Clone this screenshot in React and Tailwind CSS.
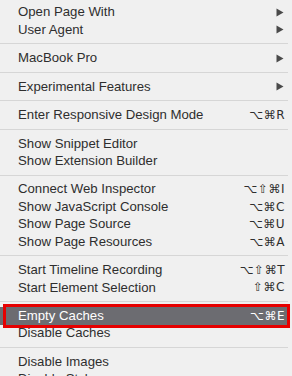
import React from "react";

const Arrow = () => (
  <svg width="8" height="9" viewBox="0 0 8 9">
    <path d="M0.5 0.5 L7.5 4.5 L0.5 8.5 Z" fill="#4a4a4a" />
  </svg>
);

const groups = [
  [
    { t: "Open Page With", arrow: true },
    { t: "User Agent", arrow: true },
  ],
  [{ t: "MacBook Pro", arrow: true }],
  [{ t: "Experimental Features", arrow: true }],
  [{ t: "Enter Responsive Design Mode", k: "⌥⌘R" }],
  [{ t: "Show Snippet Editor" }, { t: "Show Extension Builder" }],
  [
    { t: "Connect Web Inspector", k: "⌥⇧⌘I" },
    { t: "Show JavaScript Console", k: "⌥⌘C" },
    { t: "Show Page Source", k: "⌥⌘U" },
    { t: "Show Page Resources", k: "⌥⌘A" },
  ],
  [
    { t: "Start Timeline Recording", k: "⌥⇧⌘T" },
    { t: "Start Element Selection", k: "⇧⌘C" },
  ],
  [{ t: "Empty Caches", k: "⌥⌘E", hl: true }, { t: "Disable Caches" }],
  [{ t: "Disable Images" }, { t: "Disable Styles" }],
];

function Row({ item }) {
  return (
    <div
      className={
        "relative flex items-center h-[17.45px] pl-[18px] w-[288px] " +
        (item.arrow ? "pr-[4px] " : "pr-[3px] ") +
        (item.hl ? "bg-[#6c6c71] text-white" : "text-[#2e2e2e]")
      }
    >
      <span className="flex-1 whitespace-nowrap">{item.t}</span>
      {item.k && (
        <span className="whitespace-nowrap font-['DejaVu_Sans',sans-serif] text-[12px] tracking-[0.5px]">
          {item.k}
        </span>
      )}
      {item.arrow && <Arrow />}
      {item.hl && (
        <div className="absolute left-[3px] top-[-3px] w-[287px] h-[24px] border-[3px] border-[#e60000]" />
      )}
    </div>
  );
}

export default function App() {
  return (
    <div className="w-[292px] h-[376px] overflow-hidden bg-[#f0f0f0] font-['Liberation_Sans',Arial,sans-serif] text-[13.2px] pt-[3.5px]">
      {groups.map((g, i) => (
        <div key={i}>
          {i > 0 && (
            <div className="h-[11px] flex items-center">
              <div className="h-[1px] w-[288px] bg-[#d6d6d6]" />
            </div>
          )}
          {g.map((item, j) => (
            <Row key={j} item={item} />
          ))}
        </div>
      ))}
    </div>
  );
}
